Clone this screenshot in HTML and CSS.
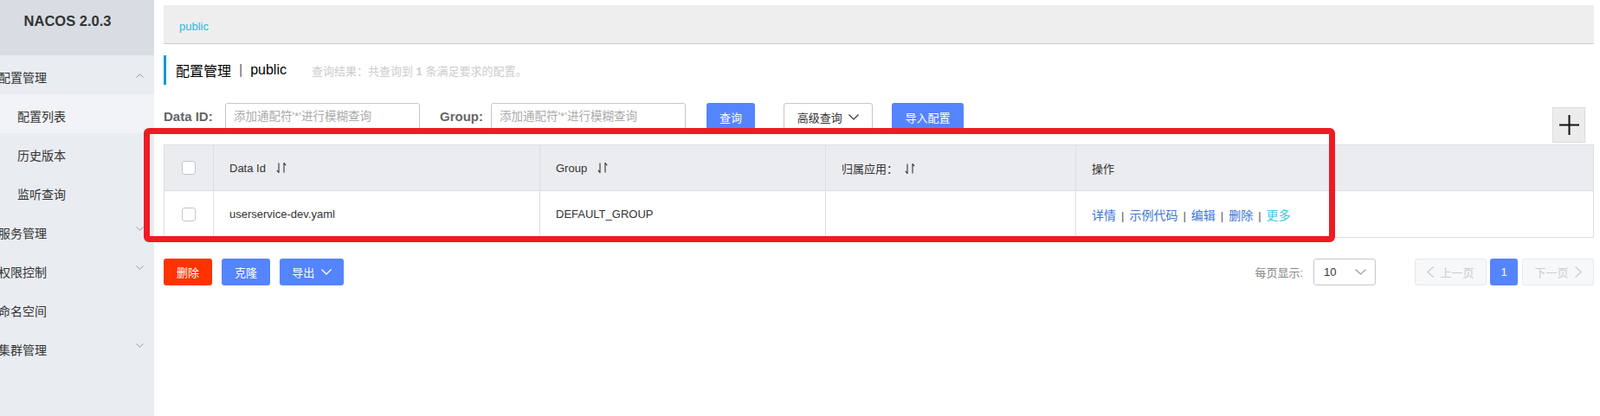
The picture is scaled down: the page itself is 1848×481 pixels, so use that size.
FILE: index.html
```html
<!DOCTYPE html>
<html lang="zh-CN">
<head>
    <meta charset="UTF-8">
    <title>NACOS 配置列表</title>
    <link rel="stylesheet" href="styles.css">
</head>
<body>
<div class="page">

    <!-- 左侧菜单 -->
    <aside class="sidebar">
        <div class="sidebar-inner">
            <div class="brand">NACOS 2.0.3</div>
            <ul class="menu">
                <li class="menu-item">
                    <span>配置管理</span>
                    <svg class="menu-arrow" width="9" height="5" viewBox="0 0 9 5"><path d="M0.5 4.5L4.5 0.8L8.5 4.5" fill="none" stroke="#999" stroke-width="1"/></svg>
                </li>
                <li class="sub-item active">配置列表</li>
                <li class="sub-item">历史版本</li>
                <li class="sub-item">监听查询</li>
                <li class="menu-item">
                    <span>服务管理</span>
                    <svg class="menu-arrow down" width="9" height="5" viewBox="0 0 9 5"><path d="M0.5 0.5L4.5 4.2L8.5 0.5" fill="none" stroke="#999" stroke-width="1"/></svg>
                </li>
                <li class="menu-item">
                    <span>权限控制</span>
                    <svg class="menu-arrow down" width="9" height="5" viewBox="0 0 9 5"><path d="M0.5 0.5L4.5 4.2L8.5 0.5" fill="none" stroke="#999" stroke-width="1"/></svg>
                </li>
                <li class="menu-item"><span>命名空间</span></li>
                <li class="menu-item">
                    <span>集群管理</span>
                    <svg class="menu-arrow down" width="9" height="5" viewBox="0 0 9 5"><path d="M0.5 0.5L4.5 4.2L8.5 0.5" fill="none" stroke="#999" stroke-width="1"/></svg>
                </li>
            </ul>
        </div>
    </aside>

    <!-- 主内容 -->
    <main class="main">
        <div class="breadcrumb"><span>public</span></div>

        <div class="page-title">
            <span class="title-text">配置管理</span>
            <span class="title-sep">|</span>
            <span class="title-text">public</span>
            <span class="query-result">查询结果：共查询到 <strong>1</strong> 条满足要求的配置。</span>
        </div>

        <div class="search-bar">
            <label class="field-label id-label">Data ID:</label>
            <div class="text-input">添加通配符'*'进行模糊查询</div>
            <label class="field-label group-label">Group:</label>
            <div class="text-input">添加通配符'*'进行模糊查询</div>
            <button class="btn btn-primary btn-query">查询</button>
            <button class="btn btn-normal btn-advanced">高级查询
                <svg width="12" height="7" viewBox="0 0 12 7"><path d="M0.5 0.5L6 6L11.5 0.5" fill="none" stroke="#333" stroke-width="1.2"/></svg>
            </button>
            <button class="btn btn-primary btn-import">导入配置</button>
            <button class="btn-add">
                <svg width="23" height="23" viewBox="0 0 23 23"><path d="M0 11.5H23M11.5 0V23" stroke="#111" stroke-width="2"/></svg>
            </button>
        </div>

        <table class="config-table">
            <colgroup>
                <col style="width:57px">
                <col style="width:377px">
                <col style="width:330px">
                <col style="width:289px">
                <col>
            </colgroup>
            <thead>
                <tr>
                    <th class="check-cell"><span class="checkbox"></span></th>
                    <th>Data Id
                        <svg class="sort-icon" width="12" height="12" viewBox="0 0 12 12"><path d="M3 0.5V11.5L0.8 8.8M9 11.5V0.5L11.2 3.2" fill="none" stroke="#333" stroke-width="1.1"/></svg>
                    </th>
                    <th>Group
                        <svg class="sort-icon" width="12" height="12" viewBox="0 0 12 12"><path d="M3 0.5V11.5L0.8 8.8M9 11.5V0.5L11.2 3.2" fill="none" stroke="#333" stroke-width="1.1"/></svg>
                    </th>
                    <th>归属应用：<svg class="sort-icon" width="12" height="12" viewBox="0 0 12 12"><path d="M3 0.5V11.5L0.8 8.8M9 11.5V0.5L11.2 3.2" fill="none" stroke="#333" stroke-width="1.1"/></svg>
                    </th>
                    <th>操作</th>
                </tr>
            </thead>
            <tbody>
                <tr>
                    <td class="check-cell"><span class="checkbox"></span></td>
                    <td>userservice-dev.yaml</td>
                    <td>DEFAULT_GROUP</td>
                    <td></td>
                    <td class="ops">
                        <a>详情</a><span class="sep">|</span><a>示例代码</a><span class="sep">|</span><a>编辑</a><span class="sep">|</span><a>删除</a><span class="sep">|</span><a class="more">更多</a>
                    </td>
                </tr>
            </tbody>
        </table>

        <div class="table-footer">
            <button class="btn btn-danger btn-small">删除</button>
            <button class="btn btn-primary btn-small">克隆</button>
            <button class="btn btn-primary btn-export">导出
                <svg width="12" height="7" viewBox="0 0 12 7"><path d="M0.5 0.5L6 6L11.5 0.5" fill="none" stroke="#fff" stroke-width="1.4"/></svg>
            </button>

            <div class="pager">
                <span class="page-size-label">每页显示:</span>
                <div class="page-size">
                    <span>10</span>
                    <svg width="13" height="7" viewBox="0 0 13 7"><path d="M0.5 0.5L6.5 6L12.5 0.5" fill="none" stroke="#999" stroke-width="1.1"/></svg>
                </div>
                <button class="page-btn page-prev">
                    <svg width="8" height="13" viewBox="0 0 8 13"><path d="M7.5 0.5L1 6.5L7.5 12.5" fill="none" stroke="#ccc" stroke-width="1.3"/></svg>
                    上一页
                </button>
                <button class="page-num">1</button>
                <button class="page-btn page-next">下一页
                    <svg width="8" height="13" viewBox="0 0 8 13"><path d="M0.5 0.5L7 6.5L0.5 12.5" fill="none" stroke="#ccc" stroke-width="1.3"/></svg>
                </button>
            </div>
        </div>
    </main>

    <!-- 截图标注框 -->
    <div class="mark-box"></div>
</div>
</body>
</html>
```

FILE: styles.css
```css
body {
    margin: 0;
    font-family: "Liberation Sans", "Noto Sans CJK SC", sans-serif;
    color: #333333;
    background-color: #ffffff;
}
.page {
    position: relative;
    display: flex;
    width: 1848px;
    height: 481px;
    overflow: hidden;
}

/* --- 左侧菜单 --- */
.sidebar {
    flex: none;
    width: 178px;
    height: 100%;
    overflow: hidden;
    background-color: #e9ecf1;
}
.sidebar-inner {
    width: 200px;
    margin-left: -22px;
}
.brand {
    height: 64px;
    line-height: 49px;
    text-align: center;
    font-size: 16.5px;
    font-weight: bold;
    color: #333333;
    background-color: #d8dde4;
}
.menu {
    list-style: none;
    margin: 0;
    padding: 0;
}
.menu li {
    display: flex;
    align-items: center;
    height: 45px;
    box-sizing: border-box;
    padding-top: 5px;
    font-size: 14px;
    color: #333333;
}
.menu-item {
    justify-content: space-between;
    padding-left: 20px;
    padding-right: 12px;
}
.menu-arrow {
    margin-bottom: 4px;
}
.menu-arrow.down {
    margin-bottom: 9px;
}
.menu .sub-item {
    padding-left: 42px;
}
.sub-item.active {
    background-color: #f2f3f6;
}

/* --- 主内容 --- */
.main {
    flex: 1;
    padding: 6px 7px 0 11px;
    min-width: 0;
}
.breadcrumb {
    display: flex;
    align-items: center;
    height: 45px;
    box-sizing: border-box;
    padding: 4px 0 0 18px;
    background-color: #eeeeee;
    border-bottom: 1px solid #cccccc;
    font-size: 13px;
    color: #2fb6e2;
}
.page-title {
    display: flex;
    align-items: center;
    height: 34px;
    margin-top: 13px;
    padding-left: 11px;
    border-left: 3px solid #0d99d3;
}
.title-text {
    font-size: 16px;
    color: #000000;
}
.title-sep {
    margin: 0 9px;
    font-size: 16px;
    color: #666666;
}
.query-result {
    margin-left: 29px;
    font-size: 13px;
    color: #cccccc;
}

/* --- 查询条件 --- */
.search-bar {
    display: flex;
    align-items: flex-start;
    margin-top: 21px;
}
.field-label {
    flex: none;
    box-sizing: border-box;
    line-height: 32px;
    font-size: 15px;
    font-weight: bold;
    color: #666666;
}
.id-label {
    width: 71px;
}
.group-label {
    width: 59px;
    margin-left: 23px;
}
.text-input {
    width: 225px;
    height: 32px;
    line-height: 30px;
    box-sizing: border-box;
    padding-left: 9px;
    border: 1px solid #c4c6cf;
    border-radius: 3px;
    font-size: 13.5px;
    color: #aaaaaa;
    white-space: nowrap;
    overflow: hidden;
}
.btn {
    height: 32px;
    padding: 0;
    border: 1px solid transparent;
    border-radius: 3px;
    font-family: inherit;
    font-size: 13px;
    cursor: pointer;
}
.btn svg {
    margin-left: 4px;
    vertical-align: 2px;
}
.btn-primary {
    background-color: #5584ff;
    color: #ffffff;
}
.btn-danger {
    background-color: #ff3300;
    color: #ffffff;
}
.btn-normal {
    background-color: #ffffff;
    border-color: #c4c6cf;
    color: #333333;
}
.btn-query {
    width: 56px;
    margin-left: 24px;
}
.btn-advanced {
    width: 103px;
    margin-left: 33px;
}
.btn-import {
    width: 83px;
    margin-left: 22px;
}
.btn-add {
    width: 38px;
    height: 41px;
    margin: 5px 10px 0 auto;
    padding: 0;
    background-color: #ececec;
    border: 1px solid #dcdcdc;
    display: flex;
    align-items: center;
    justify-content: center;
}

/* --- 配置表格 --- */
.config-table {
    width: 100%;
    margin-top: 2px;
    table-layout: fixed;
    border-collapse: collapse;
    border: 1px solid #dcdee3;
    font-size: 13px;
}
.config-table th,
.config-table td {
    padding: 0 18px;
    border: 1px solid #dcdee3;
    text-align: left;
    font-weight: normal;
    color: #333333;
}
.config-table th {
    height: 52px;
    background-color: #ebecf0;
}
.config-table td {
    height: 53px;
}
.config-table .check-cell {
    padding: 0;
    text-align: center;
}
.checkbox {
    display: inline-block;
    width: 16px;
    height: 16px;
    box-sizing: border-box;
    border: 1px solid #c4c6cf;
    border-radius: 3px;
    background-color: #ffffff;
    vertical-align: middle;
}
.sort-icon {
    margin-left: 8px;
    vertical-align: -1px;
}
.ops a {
    color: #3c76d6;
    font-size: 14px;
}
.ops a.more {
    color: #3ccbe4;
}
.ops .sep {
    margin: 0 6px;
    color: #555555;
}

/* --- 底部操作 --- */
.table-footer {
    display: flex;
    align-items: center;
    margin-top: 24px;
    height: 31px;
}
.table-footer .btn {
    height: 31px;
    margin-right: 11px;
}
.btn-small {
    width: 56px;
}
.btn-export {
    width: 74px;
}
.pager {
    display: flex;
    align-items: center;
    margin-left: auto;
}
.page-size-label {
    font-size: 13px;
    color: #888888;
    margin-right: 12px;
}
.page-size {
    display: flex;
    justify-content: space-between;
    align-items: center;
    width: 72px;
    height: 31px;
    box-sizing: border-box;
    padding: 0 10px 0 11px;
    border: 1px solid #c4c6cf;
    border-radius: 3px;
    font-size: 13px;
}
.page-btn {
    display: flex;
    align-items: center;
    justify-content: center;
    gap: 7px;
    width: 83px;
    height: 31px;
    padding: 0;
    background-color: #f7f8fa;
    border: 1px solid #e6e7eb;
    border-radius: 3px;
    font-family: inherit;
    font-size: 13px;
    color: #cccccc;
}
.page-prev {
    margin-left: 45px;
}
.page-num {
    width: 32px;
    height: 31px;
    margin: 0 5px 0 4px;
    padding: 0;
    background-color: #5584ff;
    border: none;
    border-radius: 3px;
    font-family: inherit;
    font-size: 13px;
    color: #ffffff;
}

/* --- 标注框 --- */
.mark-box {
    position: absolute;
    left: 166px;
    top: 148px;
    width: 1376px;
    height: 132px;
    box-sizing: border-box;
    border: 7px solid #ed1c24;
    border-radius: 6px;
}
```
